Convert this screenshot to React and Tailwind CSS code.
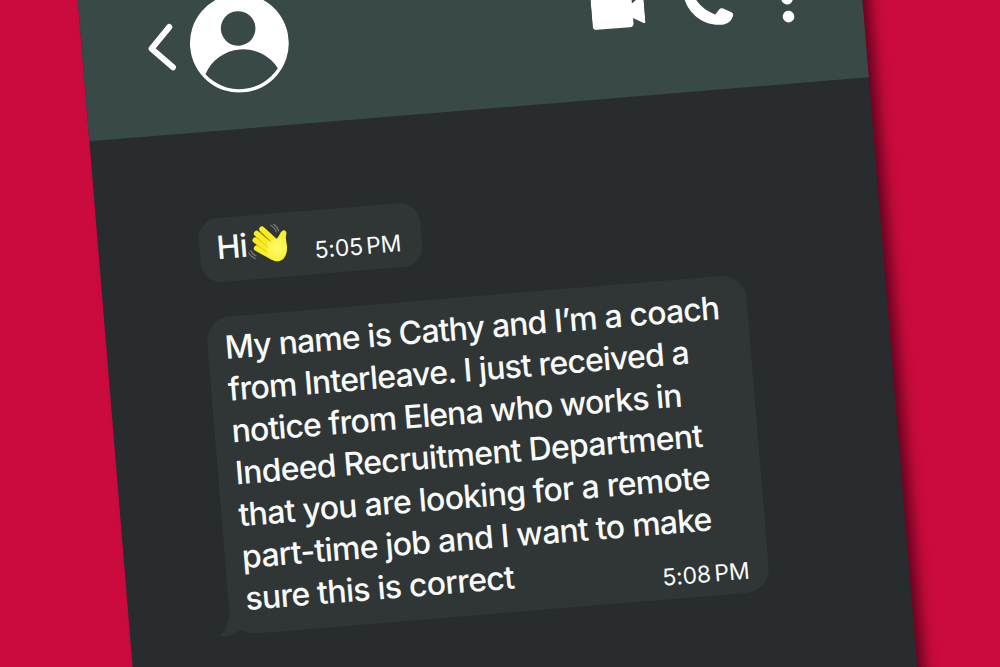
const LINES = [
  { text: "My name is Cathy and I’m a coach", tracking: "tracking-[-0.81px]" },
  { text: "from Interleave. I just received a", tracking: "tracking-[-0.82px]" },
  { text: "notice from Elena who works in", tracking: "tracking-[-0.91px]" },
  { text: "Indeed Recruitment Department", tracking: "tracking-[-0.7px]" },
  { text: "that you are looking for a remote", tracking: "tracking-[-0.71px]" },
  { text: "part-time job and I want to make", tracking: "tracking-[-0.72px]" },
  { text: "sure this is correct", tracking: "tracking-[-0.72px]" },
];

function BackIcon() {
  return (
    <svg className="-mt-[3px] h-[50px] w-[30px]" viewBox="0 0 30 50" fill="none" stroke="#fff" strokeWidth="6" strokeLinecap="round" strokeLinejoin="round">
      <path d="M23 4.6 3.6 24.8 23.4 45" />
    </svg>
  );
}

function Avatar() {
  return (
    <svg className="ml-[12px] h-[99px] w-[99px]" viewBox="-49.5 -49.5 99 99">
      <circle r="49.4" fill="#fff" />
      <g fill="#394947">
        <circle cy="-14.8" r="17.3" />
        <path d="M-36.3 28.2A41 41 0 0 1 36.3 28.2A46 46 0 0 1-36.3 28.2Z" />
      </g>
    </svg>
  );
}

function VideoIcon() {
  return (
    <svg className="h-[52px] w-[53px]" viewBox="0 0 53 52" fill="#fff">
      <rect x="0" y="3" width="41" height="38.500" rx="4" />
      <path d="M38 20 50.8 11.2Q53 10.500 53 12.500V37Q53 39.3 51 38.4L38 31Z" />
    </svg>
  );
}

function PhoneIcon() {
  return (
    <svg className="h-[52px] w-[52px]" viewBox="0 0 52 52" fill="#fff">
      <path d="M11.5 1C6 2 3 6 3 11C3 30 19 46.5 38.5 46.5C45 46.5 49 43.5 50.8 38.5C51.3 36.8 50.7 35.8 49.4 35L41.4 30.6C39.8 29.8 38.6 30 37.5 31.2L33.2 36C24 31.5 17 24.5 13.8 16.5L18.5 12.5C19.5 11.6 19.8 10.4 19.3 9L15 2.6C14.2 1.2 13 .7 11.5 1Z" />
    </svg>
  );
}

function MoreIcon() {
  return (
    <svg className="h-[52px] w-4" viewBox="0 0 16 52" fill="#fff">
      <circle cx="8" cy="8" r="5.8" />
      <circle cx="8" cy="26" r="5.8" />
      <circle cx="8" cy="44" r="5.8" />
    </svg>
  );
}

function WavingHand() {
  return (
    <svg className="-mt-[5px] -ml-px h-[55px] w-[50px] rotate-[4.7deg]" viewBox="0 0 150 165" fill="none" strokeLinecap="round">
      <defs>
        <radialGradient id="palm" gradientUnits="userSpaceOnUse" cx="98" cy="96" r="50">
          <stop offset="0" stopColor="#fffb70" />
          <stop offset="1" stopColor="#f8ed22" />
        </radialGradient>
      </defs>
      <g stroke="#77797a" strokeWidth="3.5">
        <path d="M78 28Q91 34 96 48" />
        <path d="M87 25Q99 32 103 45" />
        <path d="M19 104Q24 115 35 120" />
        <path d="M13 111Q20 123 33 128" />
      </g>
      <g stroke="#f8ed22" strokeWidth="17">
        <path d="M53 40 94 78" />
        <path d="M37 53 82 92" />
        <path d="M33 73 80 108" />
        <path d="M37 97 82 122" />
      </g>
      <path fill="url(#palm)" d="M72 76 98 68C105 60 107 50 113 45C120 40 128 46 126 55C122 67 127 79 128 91C129 110 124 122 115 131C104 139 91 137 79 130L64 114Z" />
      <g stroke="#d6c81a" strokeWidth="2.5">
        <path d="M47 48 80 78" />
        <path d="M36 65 71 94" />
        <path d="M37 87 69 109" />
      </g>
    </svg>
  );
}

export default function App() {
  return (
    <div className="h-[667px] w-[1000px] overflow-hidden bg-[#cb0b3e] font-[Inter,sans-serif] text-[#f8fafa]">
      <div className="-mt-[58.3px] ml-[72.6px] h-[900px] w-[782px] origin-top-left -rotate-[4.7deg] bg-[#282c2f] shadow-[10px_0_14px_-3px_rgba(50,0,15,0.7)]">
        <header className="flex h-[200px] items-center bg-[#394947] pt-[29px] pl-[66px]">
          <BackIcon />
          <Avatar />
          <div className="ml-[304px] flex">
            <VideoIcon />
            <div className="ml-[37px]"><PhoneIcon /></div>
            <div className="ml-[46px]"><MoreIcon /></div>
          </div>
        </header>
        <main className="pt-[86.5px] pl-[101px]">
          <div className="flex h-16 w-[222px] items-center rounded-[20px] bg-[#303635] pl-[17px]">
            <span className="-mt-[3px] w-[29px] text-[32px] leading-none font-medium tracking-[-0.8px]">Hi</span>
            <WavingHand />
            <span className="mt-[18px] ml-[19.5px] text-[23px] leading-none whitespace-nowrap tracking-[-0.15px] [word-spacing:-3px]">5:05 PM</span>
          </div>
          <div className="relative mt-[35px] h-[318px] w-[541px] rounded-[24px] bg-[#303635] pt-[10px] pl-[16.5px] text-[32px] leading-[42px] font-medium">
            <svg className="absolute bottom-[-2px] -left-[14px] h-[32px] w-[40px]" viewBox="0 0 40 32" fill="#303635">
              <path d="M14 0C14.500 14 10 25 1 29.500C9 31.500 17 29.500 22.500 25.500L34 26V0Z" />
            </svg>
            {LINES.map((line) => (
              <p key={line.text} className={`relative origin-left rotate-[0.1deg] whitespace-nowrap ${line.tracking}`}>{line.text}</p>
            ))}
            <span className="absolute right-[19.5px] bottom-[9.5px] text-[23px] leading-none font-normal whitespace-nowrap tracking-[-0.15px] [word-spacing:-3px]">5:08 PM</span>
          </div>
        </main>
      </div>
    </div>
  );
}
